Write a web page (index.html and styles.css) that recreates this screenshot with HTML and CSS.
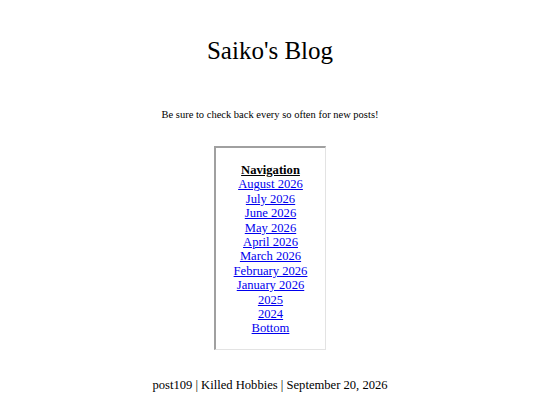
FILE: index.html
```html
<!DOCTYPE html>
<html>
<head>
<meta charset="utf-8">
<link rel="stylesheet" href="styles.css">
</head>
<body>
<div class="page">
  <h1 class="title">Saiko's Blog</h1>
  <p class="tagline">Be sure to check back every so often for new posts!</p>
  <div class="nav">
    <div class="nav-head">Navigation</div>
    <a href="#">August 2026</a>
    <a href="#">July 2026</a>
    <a href="#">June 2026</a>
    <a href="#">May 2026</a>
    <a href="#">April 2026</a>
    <a href="#">March 2026</a>
    <a href="#">February 2026</a>
    <a href="#">January 2026</a>
    <a href="#">2025</a>
    <a href="#">2024</a>
    <a href="#">Bottom</a>
  </div>
  <p class="post">post109 | Killed Hobbies | September 20, 2026</p>
</div>
</body>
</html>
```
FILE: styles.css
```css
html, body {
  margin: 0;
  padding: 0;
  background: #fff;
}
body {
  font-family: "Liberation Serif", "Times New Roman", serif;
  color: #000;
}
.page {
  display: flex;
  flex-direction: column;
  align-items: center;
  text-align: center;
}
.title {
  font-size: 25px;
  font-weight: normal;
  margin: 36px 0 0;
  line-height: 30px;
}
.tagline {
  font-size: 10.5px;
  margin: 42px 0 0;
  line-height: 14px;
}
.nav {
  margin-top: 24px;
  width: 112px;
  box-sizing: border-box;
  height: 204px;
  border-style: solid;
  border-width: 2px 1px 1px 2px;
  border-color: #a0a0a0 #e3e3e3 #e3e3e3 #a0a0a0;
  padding-top: 15px;
  display: flex;
  flex-direction: column;
  align-items: center;
  font-size: 12.6px;
  line-height: 14.4px;
}
.nav-head {
  font-weight: bold;
  text-decoration: underline;
}
.nav a {
  color: #0000ee;
  text-decoration: underline;
}
.post {
  font-size: 12.6px;
  margin: 27px 0 0;
  line-height: 16px;
}
```
